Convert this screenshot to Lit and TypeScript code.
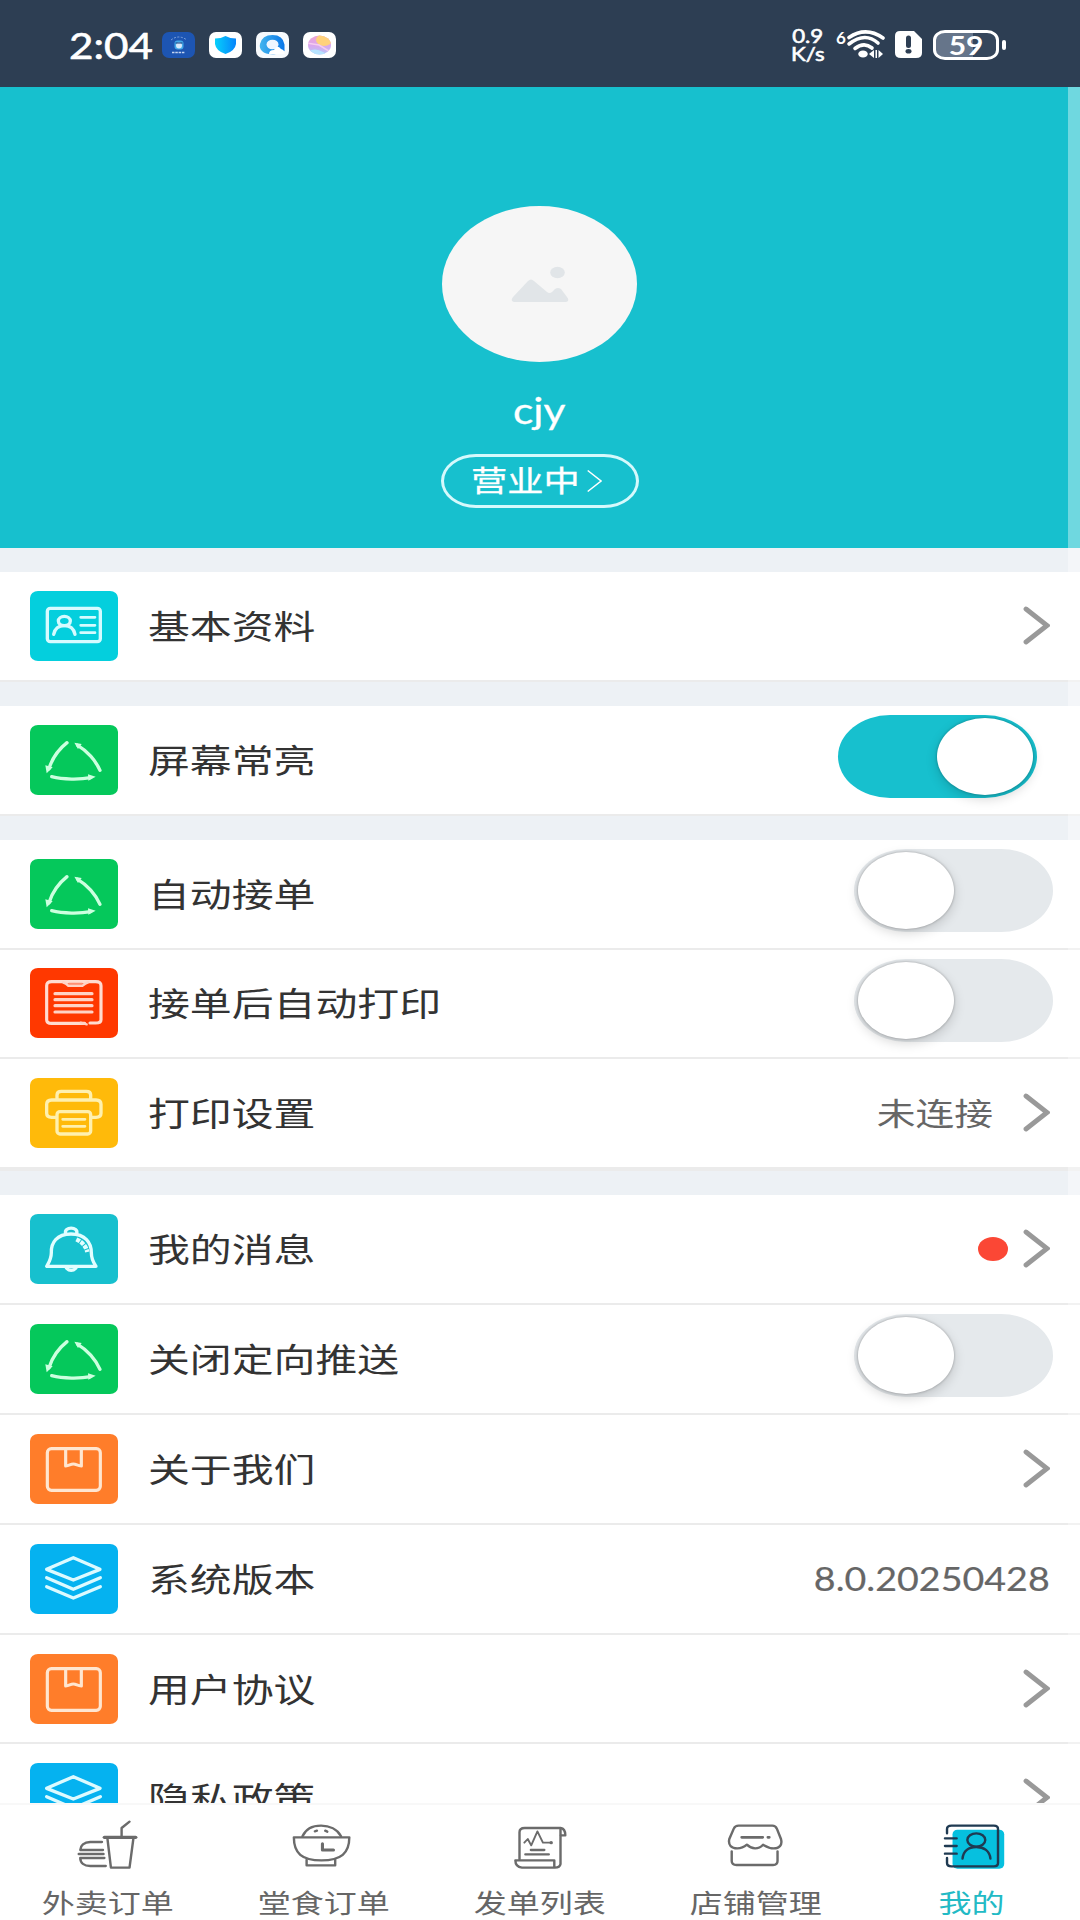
import { LitElement, html, css, nothing, TemplateResult } from "lit";
import { customElement, property } from "lit/decorators.js";

const CYAN = "#17c0ce";

const profileIcon = html`<svg viewBox="90 152 264 210" preserveAspectRatio="none">
  <g fill="none" stroke="#d5fbff" stroke-width="10" stroke-linecap="round">
    <rect x="142" y="204" width="159" height="100" rx="9" />
    <ellipse cx="193" cy="242" rx="18" ry="14" />
    <path d="M161 282C165 263 178 256 193 256S221 263 225 282" />
    <path d="M242 231H285M242 255H285M242 277H285" stroke-width="8" />
  </g>
</svg>`;

const cycleIcon = html`<svg viewBox="90 553 264 210" preserveAspectRatio="none">
  <g fill="none" stroke="#ccffdf" stroke-width="10" stroke-linecap="round">
    <path d="M201 606C176 626 156 655 147 684" />
    <path d="M233 614C261 630 287 660 300 689" />
    <path d="M155 708C190 717 240 717 272 711" />
  </g>
  <g fill="#ccffdf">
    <path d="M136 674L158 680L140 698Z" />
    <path d="M223 606L245 610L234 625Z" />
    <path d="M264 701L287 708L265 720Z" />
  </g>
</svg>`;

const receiptIcon = html`<svg viewBox="90 414 264 210" preserveAspectRatio="none">
  <g fill="none" stroke="#ffd3c6" stroke-width="9.500" stroke-linecap="round">
    <path d="M254 580H155Q140 580 140 569V467Q140 455 155 455H287Q303 455 303 467V569Q303 579 287 579H270" stroke="#ffdccf" />
    <path d="M190 457Q198 459 205 467H247Q256 460 264 457" stroke-width="8" />
    <path d="M207 461H246" stroke="#ff8f73" stroke-width="5" />
    <path d="M242 578L260 583" stroke-width="7" />
    <path d="M165 491H276M165 509H276M165 527H276M165 546H276" />
  </g>
</svg>`;

const printerIcon = html`<svg viewBox="90 744 264 210" preserveAspectRatio="none">
  <g fill="none" stroke="#fff0ae" stroke-width="10" stroke-linecap="round" stroke-linejoin="round">
    <path d="M171 808V795Q171 784 184 784H259Q272 784 272 795V808" />
    <path d="M168 862H155Q140 862 140 850V823Q140 810 155 810H288Q303 810 303 823V850Q303 862 288 862H276" />
    <rect x="171" y="845" width="101" height="67" rx="9" />
    <path d="M188 868H255M188 889H255" stroke-width="8" />
  </g>
</svg>`;

const bellIcon = html`<svg viewBox="90 102 264 210" preserveAspectRatio="none">
  <g fill="none" stroke="#e2feff" stroke-width="10" stroke-linecap="round" stroke-linejoin="round">
    <path d="M197 161C190 139 237 139 230 161" />
    <path d="M213 162C170 162 153 189 154 218C154 237 146 248 140 259H288C281 248 274 238 274 218C274 189 256 162 213 162Z" />
    <path d="M199 264C206 273 221 273 228 264" />
    <path d="M229 178C248 187 258 199 262 216" stroke-width="13" stroke-dasharray="12 3" stroke-linecap="butt" />
  </g>
</svg>`;

const bookIcon = html`<svg viewBox="90 761 264 210" preserveAspectRatio="none">
  <g fill="none" stroke="#ffe6d0" stroke-width="9.500" stroke-linejoin="round">
    <rect x="142" y="805" width="159" height="125" rx="12" />
    <path d="M197 806V857C208 856 211 851 220 851S232 856 244 857V806" />
  </g>
</svg>`;

const layersIcon = html`<svg viewBox="90 130 264 210" preserveAspectRatio="none">
  <g fill="none" stroke="#dcfaff" stroke-width="10" stroke-linecap="round" stroke-linejoin="round">
    <path d="M220 171L300 206L220 238L140 206Z" />
    <path d="M140 231L220 266L301 231" />
    <path d="M140 258L220 292L301 258" />
  </g>
</svg>`;

const chevron = html`<svg class="chevron" viewBox="0 0 27 39">
  <path d="M3 3L24 19.500L3 36" fill="none" stroke="#999" stroke-width="4.800" stroke-linecap="round" />
</svg>`;

const takeoutIcon = html`<svg viewBox="209 81 209 168" preserveAspectRatio="none">
  <g fill="none" stroke="#6b6b6b" stroke-width="7" stroke-linecap="round" stroke-linejoin="round">
    <path d="M376 95L353 114V140" />
    <path d="M303 142H394" stroke-width="10" />
    <path d="M312 147L322 233H376L387 147" />
    <path d="M296 156H262C244 156 233 167 233 180H299" />
    <path d="M229 192H300" stroke-width="8" />
    <path d="M303 204H233C233 219 244 228 262 228H307" />
  </g>
</svg>`;

const bowlIcon = html`<svg viewBox="836 81 209 168" preserveAspectRatio="none">
  <g fill="none" stroke="#6b6b6b" stroke-width="7" stroke-linecap="round" stroke-linejoin="round">
    <path d="M878 139C887 118 908 107 932 107S979 118 990 139" />
    <path d="M853 142H1014C1014 190 990 211 933 211S853 190 853 142Z" />
    <path d="M890 209V226H973V209" />
    <path d="M936 161V180H968" stroke-width="9" />
    <path d="M914 124L920 122M944 122L950 125" />
  </g>
</svg>`;

const scrollIcon = html`<svg viewBox="1464 81 209 168" preserveAspectRatio="none">
  <g fill="none" stroke="#6b6b6b" stroke-width="7" stroke-linecap="round" stroke-linejoin="round">
    <path d="M1509 208V127Q1509 114 1524 114H1628Q1642 116 1642 136H1629" />
    <path d="M1628 116V222Q1626 233 1612 233H1516Q1497 231 1497 211H1610V231" />
    <path d="M1523 158L1533 147L1543 166L1561 124L1577 158H1600" stroke-width="5.500" />
    <path d="M1542 180H1581M1526 193H1594" />
  </g>
  <circle cx="1601" cy="158" r="5" fill="#6b6b6b" />
</svg>`;

const shopIcon = html`<svg viewBox="523 81 209 168" preserveAspectRatio="none">
  <g fill="none" stroke="#6b6b6b" stroke-width="7" stroke-linecap="round" stroke-linejoin="round">
    <path d="M577 107H675Q684 107 688 116L700 147C705 165 695 175 679 175C665 175 658 170 648 164C640 173 633 175 625 175S609 172 601 164C593 171 586 175 573 175C556 175 546 165 550 147L563 116Q567 107 577 107Z" />
    <path d="M557 184V213Q557 225 571 225H677Q690 225 690 213V184" />
    <path d="M586 142H647M662 142H666" stroke-width="8" />
  </g>
</svg>`;

const mineIcon = html`<svg viewBox="1150 81 209 168" preserveAspectRatio="none">
  <rect x="1198" y="119" width="150" height="117" rx="14" fill="#06c0df" />
  <g fill="none" stroke="#1f3a52" stroke-width="7" stroke-linecap="round">
    <path d="M1182 130V117Q1182 107 1195 107H1318Q1330 107 1330 117V219Q1330 229 1318 229H1195Q1182 229 1182 219V204" />
    <path d="M1176 145H1210M1176 168H1210M1176 191H1210" />
    <ellipse cx="1267" cy="150" rx="26" ry="20" />
    <path d="M1227 206C1229 183 1245 171 1267 171S1306 183 1308 206" />
  </g>
</svg>`;

interface Entry {
  label: string;
  color: string;
  icon: TemplateResult;
  value?: string;
  numeric?: boolean;
  dot?: boolean;
  arrow?: boolean;
  toggle?: "on" | "off";
  inset?: boolean;
}

const GREEN = "#05c85b";
const ORANGE = "#ff7d2a";
const BLUE = "#05b2f0";

const GROUPS: Entry[][] = [
  [{ label: "基本资料", color: "#04cfdd", icon: profileIcon, arrow: true }],
  [{ label: "屏幕常亮", color: GREEN, icon: cycleIcon, toggle: "on", inset: true }],
  [
    { label: "自动接单", color: GREEN, icon: cycleIcon, toggle: "off" },
    { label: "接单后自动打印", color: "#ff3800", icon: receiptIcon, toggle: "off" },
    { label: "打印设置", color: "#ffba0a", icon: printerIcon, value: "未连接", arrow: true },
  ],
  [
    { label: "我的消息", color: CYAN, icon: bellIcon, dot: true, arrow: true },
    { label: "关闭定向推送", color: GREEN, icon: cycleIcon, toggle: "off" },
    { label: "关于我们", color: ORANGE, icon: bookIcon, arrow: true },
    { label: "系统版本", color: BLUE, icon: layersIcon, value: "8.0.20250428", numeric: true },
    { label: "用户协议", color: ORANGE, icon: bookIcon, arrow: true },
    { label: "隐私政策", color: BLUE, icon: layersIcon, arrow: true },
  ],
];

const TABS = [
  { label: "外卖订单", icon: takeoutIcon },
  { label: "堂食订单", icon: bowlIcon },
  { label: "发单列表", icon: scrollIcon },
  { label: "店铺管理", icon: shopIcon },
  { label: "我的", icon: mineIcon, active: true },
];

@customElement("status-bar")
export class StatusBar extends LitElement {
  static styles = css`
    :host {
      display: flex;
      flex: none;
      align-items: center;
      box-sizing: border-box;
      height: 87px;
      padding: 2px 74px 0 68px;
      background: #2d3e53;
      color: #fff;
      font-family: Lato, sans-serif;
    }
    svg { display: block; }
    .time {
      width: 94px;
      font-size: 36px;
      line-height: 40px;
      padding-left: 1px;
      box-sizing: border-box;
      white-space: nowrap;
    }
    .time span, .net span, .pct {
      display: inline-block;
      transform: scaleX(1.17);
      transform-origin: left center;
    }
    .time span { -webkit-text-stroke: 0.6px #fff; }
    .apps { display: flex; gap: 14px; }
    .spacer { flex: 1; }
    .net {
      width: 45px;
      display: flex;
      flex-direction: column;
      font-size: 19px;
      line-height: 18px;
      -webkit-text-stroke: 0.6px #fff;
    }
    .net span:first-child { padding-left: 1px; }
    .wifi { margin-right: 8px; }
    .sim { margin-right: 11px; }
    .battery {
      display: flex;
      align-items: center;
      justify-content: center;
      box-sizing: border-box;
      width: 66px;
      height: 30px;
      border: 3px solid #fff;
      border-radius: 12px / 10px;
      background: linear-gradient(90deg, #66758a 61%, #35465b 61%);
    }
    .pct {
      font-size: 26px;
      line-height: 26px;
      font-weight: 700;
      transform: scaleX(1.15);
      transform-origin: center;
    }
    .nub { width: 4px; height: 10px; margin-left: 3px; border-radius: 2px; background: #fff; }
  `;

  render() {
    return html`
      <div class="time"><span>2:04</span></div>
      <div class="apps">
        <svg width="33" height="26" viewBox="0 0 33 26">
          <rect width="33" height="26" rx="7" fill="#1d55b2" />
          <path d="M9 8Q16.500 2 25 8" fill="none" stroke="#7ea2dc" stroke-dasharray="2 1.500" />
          <rect x="12.500" y="8.500" width="9" height="9" rx="3" fill="#42a8e8" />
          <ellipse cx="17" cy="13.500" rx="3" ry="3" fill="#d6e9fb" />
          <path d="M13.500 11H20.500" stroke="#173c7d" />
          <path d="M10 20.500H23" stroke="#c3d4f2" stroke-width="1.600" stroke-dasharray="2.500 .8" />
        </svg>
        <svg width="33" height="26" viewBox="0 0 33 26">
          <defs><linearGradient id="shield"><stop stop-color="#06d0fb" /><stop offset="1" stop-color="#0785fb" /></linearGradient></defs>
          <rect width="33" height="26" rx="7" fill="#fff" />
          <path d="M16.500 4Q21 6.500 27 6.500V12Q26 19 16.500 22Q7 19 6 12V6.500Q12 6.500 16.500 4Z" fill="url(#shield)" />
        </svg>
        <svg width="33" height="26" viewBox="0 0 33 26">
          <defs><linearGradient id="ring"><stop stop-color="#44b5ee" /><stop offset="1" stop-color="#0876e8" /></linearGradient></defs>
          <rect width="33" height="26" rx="7" fill="#f7fafd" />
          <path d="M6 19Q3 16 4 12Q6 3 16.500 3T28.500 12.500V19L20 22Q10 23 6 19Z" fill="url(#ring)" />
          <ellipse cx="16.500" cy="12.500" rx="6" ry="4.800" fill="#eef6ff" />
          <path d="M13 22Q13 18 18 18Q21 12 25 17Q29 18 28.500 22Z" fill="#fff" />
        </svg>
        <svg width="33" height="26" viewBox="0 0 33 26">
          <defs>
            <linearGradient id="dawn" x2="0" y2="1"><stop stop-color="#f6a6c8" /><stop offset=".5" stop-color="#dba5ee" /><stop offset="1" stop-color="#a8d2fa" /></linearGradient>
            <clipPath id="orb"><ellipse cx="16.500" cy="13" rx="11.500" ry="9.500" /></clipPath>
          </defs>
          <rect width="33" height="26" rx="7" fill="#fff" />
          <g clip-path="url(#orb)">
            <rect width="33" height="26" fill="url(#dawn)" />
            <ellipse cx="21" cy="8" rx="8" ry="6" fill="#ffd27c" />
            <path d="M4 11L16 13L29 21" fill="none" stroke="#f5cdf0" stroke-width="1.500" />
            <path d="M4 20Q12 15 20 20T29 22V26H4Z" fill="#b7e3ff" />
          </g>
        </svg>
      </div>
      <div class="spacer"></div>
      <div class="net"><span>0.9</span><span>K/s</span></div>
      <svg class="wifi" width="51" height="32" viewBox="0 0 51 32">
        <text x="0" y="14.500" font-size="17" font-weight="700" fill="#fff">6</text>
        <g fill="none" stroke="#fff" stroke-width="3.600" stroke-linecap="round">
          <path d="M13 8.500Q30 -3 47 9" />
          <path d="M13 15Q29 2.500 42 14" />
          <path d="M19 19.500Q28 12.500 36 19" />
        </g>
        <ellipse cx="27" cy="25" rx="4.800" ry="3.500" fill="#fff" />
        <path d="M33 25L38 21V29ZM39.500 21H41V29H39.500ZM42.500 21L47 25L42.500 29Z" fill="#fff" />
      </svg>
      <svg class="sim" width="27" height="27" viewBox="0 0 27 27">
        <path d="M5 0H19L27 8V22Q27 27 21 27H6Q0 27 0 22V5Q0 0 5 0Z" fill="#fff" />
        <path d="M13.500 7V14.500" stroke="#2d3e53" stroke-width="5" stroke-linecap="round" />
        <ellipse cx="13.500" cy="20.300" rx="3" ry="2.300" fill="#2d3e53" />
      </svg>
      <div class="battery"><span class="pct">59</span></div>
      <div class="nub"></div>
    `;
  }
}

@customElement("switch-toggle")
export class SwitchToggle extends LitElement {
  @property({ type: Boolean, reflect: true }) on = false;

  static styles = css`
    :host {
      display: flex;
      box-sizing: border-box;
      width: 199px;
      height: 83px;
      padding: 3px 3px 3px 4px;
      border-radius: 52px / 41.5px;
      background: #e5e9ec;
    }
    :host([on]) { background: #17c0ce; justify-content: flex-end; padding-right: 4px; }
    .knob {
      width: 96px;
      height: 77px;
      border-radius: 50%;
      background: #fff;
      box-shadow: 0 0 2px 1px rgba(0, 0, 0, 0.14), 0 4px 12px rgba(0, 0, 0, 0.17);
    }
  `;

  render() {
    return html`<div class="knob"></div>`;
  }
}

@customElement("app-root")
export class AppRoot extends LitElement {
  static styles = css`
    :host {
      display: flex;
      flex-direction: column;
      width: 1080px;
      height: 1920px;
      overflow: hidden;
      background: #fff;
      font-family: Lato, "Noto Sans CJK SC", sans-serif;
      color: #333;
    }
    svg { display: block; width: 100%; height: 100%; }
    .page {
      position: relative;
      flex: none;
      height: 1716px;
      overflow: hidden;
      background: #edf1f5;
    }
    .track {
      position: absolute;
      top: 0;
      right: 0;
      bottom: 0;
      width: 12px;
      background: rgba(255, 255, 255, 0.38);
    }
    .hero {
      display: flex;
      flex-direction: column;
      align-items: center;
      box-sizing: border-box;
      height: 461px;
      padding-top: 119px;
      background: #17c0ce;
      color: #fff;
    }
    .avatar {
      display: flex;
      align-items: center;
      justify-content: center;
      width: 195px;
      height: 156px;
      margin-right: 1px;
      border-radius: 50%;
      background: #f6f6f6;
    }
    .avatar svg { width: 58px; height: 36px; }
    .name {
      margin: 26px 2px 0 0;
      height: 44px;
      font-size: 36px;
      line-height: 44px;
      transform: scaleX(1.18);
      -webkit-text-stroke: 0.3px #fff;
    }
    .state {
      display: flex;
      align-items: center;
      box-sizing: border-box;
      width: 198px;
      height: 54px;
      margin-top: 22px;
      padding-left: 27px;
      border: 3px solid #d5f9fc;
      border-radius: 35px / 27px;
    }
    .state span {
      width: 116px;
      font-size: 29px;
      line-height: 40px;
      white-space: nowrap;
      transform: scaleX(1.25);
      transform-origin: left center;
      -webkit-text-stroke: 0.3px #fff;
    }
    .state svg { width: 15px; height: 24px; }
    .groups { display: flex; flex-direction: column; gap: 24px; padding-top: 24px; }
    .group:nth-child(3) { border-bottom: 2px solid #ebebeb; }
    .row {
      display: flex;
      align-items: center;
      box-sizing: border-box;
      height: 109.850px;
      padding: 0 30px;
      border-bottom: 2px solid #ebebeb;
      background: #fff;
    }
    .tile { width: 88px; height: 70px; margin-right: 29.500px; border-radius: 8px / 7px; overflow: hidden; }
    .label {
      flex: 1;
      font-size: 33.500px;
      line-height: 50px;
      white-space: nowrap;
      transform: scaleX(1.25);
      transform-origin: left center;
    }
    .value {
      font-size: 31px;
      line-height: 50px;
      color: #666;
      white-space: nowrap;
      transform: scaleX(1.25);
      transform-origin: right center;
    }
    .value.numeric { transform: scaleX(1.175); font-size: 32px; -webkit-text-stroke: 0.2px #666; }
    .dot { width: 30px; height: 24px; border-radius: 50%; background: #fb4735; margin-right: -15px; }
    .chevron { flex: none; width: 27px; height: 39px; margin: 0 0 1px 30px; }
    switch-toggle { flex: none; margin: 0 -3px 6px 0; }
    switch-toggle.inset { margin-right: 13px; }
    .tabs {
      flex: 1;
      display: grid;
      grid-template-columns: repeat(5, 1fr);
      box-sizing: border-box;
      min-height: 0;
      border-top: 2px solid #f8f8f8;
      background: #fff;
    }
    .tab { display: flex; flex-direction: column; align-items: center; padding-top: 12px; color: #666; }
    .tab.active { color: #22bac5; }
    .glyph { width: 72px; height: 56px; }
    .caption {
      margin: 13px 1px 0 0;
      font-size: 26.400px;
      line-height: 34px;
      white-space: nowrap;
      transform: scaleX(1.25);
    }
  `;

  private row(e: Entry) {
    return html`
      <div class="row">
        <div class="tile" style="background:${e.color}">${e.icon}</div>
        <div class="label">${e.label}</div>
        ${e.value ? html`<div class="value ${e.numeric ? "numeric" : ""}">${e.value}</div>` : nothing}
        ${e.dot ? html`<div class="dot"></div>` : nothing}
        ${e.toggle
          ? html`<switch-toggle class=${e.inset ? "inset" : ""} ?on=${e.toggle === "on"}></switch-toggle>`
          : nothing}
        ${e.arrow ? chevron : nothing}
      </div>
    `;
  }

  render() {
    return html`
      <status-bar></status-bar>
      <div class="page">
        <div class="hero">
          <div class="avatar">
            <svg viewBox="0 0 58 36">
              <ellipse cx="46.500" cy="6.500" rx="7.300" ry="5.800" fill="#e1e5e8" />
              <path d="M3 36Q-1 35 2 31L17 15Q20 12 23 15L36 26Q38.500 28 41 26L44 23Q47 21 50 23L56 31Q59 35 55 36Z" fill="#e1e5e8" />
            </svg>
          </div>
          <div class="name">cjy</div>
          <div class="state">
            <span>营业中</span>
            <svg viewBox="0 0 15 24"><path d="M.7 1.500L14 12L.7 22.500" fill="none" stroke="#fff" stroke-width="1.500" /></svg>
          </div>
        </div>
        <div class="groups">
          ${GROUPS.map((g) => html`<div class="group">${g.map((e) => this.row(e))}</div>`)}
        </div>
        <div class="track"></div>
      </div>
      <nav class="tabs">
        ${TABS.map(
          (t) => html`<div class="tab ${t.active ? "active" : ""}">
            <div class="glyph">${t.icon}</div>
            <div class="caption">${t.label}</div>
          </div>`
        )}
      </nav>
    `;
  }
}
